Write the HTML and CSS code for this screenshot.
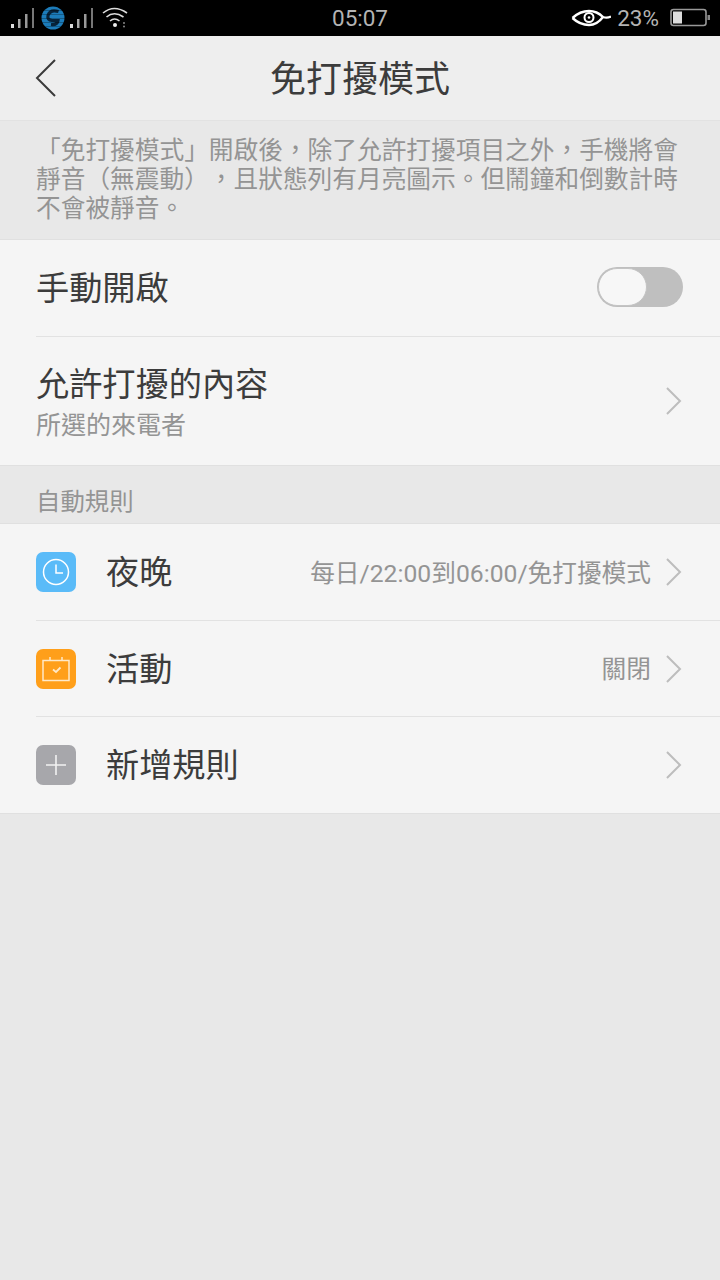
FILE: index.html
```html
<!DOCTYPE html>
<html lang="zh-Hant">
<head>
    <meta charset="UTF-8">
    <meta name="viewport" content="width=device-width, initial-scale=1.0">
    <title>免打擾模式</title>
    <link rel="stylesheet" href="styles.css">
</head>
<body>
    <div class="status-bar">
        <div class="status-left">
            <svg class="signal" width="26" height="22" viewBox="0 0 26 22"><g fill="#ddd"><rect x="1" y="17" width="3" height="4"/><rect x="8" y="12" width="2.5" height="9" fill="#aaa"/><rect x="15" y="7" width="2.5" height="14" fill="#999"/><rect x="22" y="1" width="2" height="20" fill="#777"/></g></svg>
            <svg class="carrier" width="24" height="24" viewBox="0 0 24 24"><circle cx="12" cy="12" r="11.500" fill="#1c7cba"/><path d="M17.500 5.500 Q9 3 7 9.500 Q6 14 11 14.500 L17 14.500 Q16.500 19 10 18.500" fill="none" stroke="#07233a" stroke-width="3.200"/><path d="M1 4.500 H23 M0 8.500 H24 M0 12.500 H24 M0 16.500 H24 M1 20.500 H23" stroke="#000" stroke-opacity="0.350" stroke-width="0.800"/></svg>
            <svg class="signal" width="26" height="22" viewBox="0 0 26 22"><g fill="#ddd"><rect x="1" y="17" width="3" height="4"/><rect x="8" y="12" width="2.5" height="9" fill="#aaa"/><rect x="15" y="7" width="2.5" height="14" fill="#999"/><rect x="22" y="1" width="2" height="20" fill="#777"/></g></svg>
            <svg class="wifi" width="26" height="24" viewBox="0 0 26 24"><g fill="none" stroke="#ddd" stroke-width="1.600"><path d="M1 7 Q12 -2 25 7"/><path d="M4.500 11 Q12 4.500 21.500 11"/><path d="M8 15 Q12.500 11 17.500 15"/></g><circle cx="13" cy="19" r="2" fill="#eee"/><circle cx="22" cy="17" r="1" fill="#888"/><circle cx="22" cy="20.500" r="1" fill="#888"/></svg>
        </div>
        <span class="status-time">05:07</span>
        <div class="status-right">
            <svg class="eye" width="40" height="20" viewBox="0 0 40 20"><path d="M1.500 10 Q9 3 18 3 Q26 3 32 9 Q36 10.500 40 8.500" fill="none" stroke="#fff" stroke-width="2.400"/><path d="M1.500 10 Q9 17 18 17 Q26 17 32 9" fill="none" stroke="#fff" stroke-width="2.400"/><circle cx="18" cy="9.500" r="4.500" fill="none" stroke="#fff" stroke-width="2"/><circle cx="18" cy="9.500" r="1.300" fill="#fff"/></svg>
            <span class="battery-pct">23%</span>
            <svg class="battery" width="40" height="20" viewBox="0 0 40 20"><rect x="1" y="1.500" width="35" height="16" rx="2.500" fill="none" stroke="#999" stroke-width="1.600"/><rect x="3" y="3.500" width="9" height="12" fill="#ddd"/><rect x="37.500" y="7" width="2.500" height="5" fill="#888"/></svg>
        </div>
    </div>

    <header class="title-bar">
        <svg class="back" width="22" height="38" viewBox="0 0 22 38"><path d="M20 1 L2 19 L20 37" fill="none" stroke="#3a3a3a" stroke-width="2"/></svg>
        <h1 class="title">免打擾模式</h1>
    </header>

    <p class="notice">「免打擾模式」開啟後，除了允許打擾項目之外，手機將會靜音（無震動），且狀態列有月亮圖示。但鬧鐘和倒數計時不會被靜音。</p>

    <section class="group">
        <div class="row row-switch">
            <span class="row-label">手動開啟</span>
            <div class="switch"><div class="switch-knob"></div></div>
        </div>
        <div class="row row-double">
            <div class="row-text">
                <span class="row-label">允許打擾的內容</span>
                <span class="row-sub">所選的來電者</span>
            </div>
            <svg class="chevron" width="16" height="28" viewBox="0 0 16 28"><path d="M1 1 L14 14 L1 27" fill="none" stroke="#bdbdbd" stroke-width="2"/></svg>
        </div>
    </section>

    <div class="section-head">自動規則</div>

    <section class="group group-rules">
        <div class="row rule">
            <span class="rule-icon icon-blue">
                <svg width="28" height="28" viewBox="0 0 28 28"><circle cx="14" cy="14" r="12.500" fill="none" stroke="#fff" stroke-width="1.500"/><path d="M14 6.500 V15 H21" fill="none" stroke="#fff" stroke-width="1.500"/></svg>
            </span>
            <span class="row-label">夜晚</span>
            <span class="row-value">每日/22:00到06:00/免打擾模式</span>
            <svg class="chevron" width="16" height="28" viewBox="0 0 16 28"><path d="M1 1 L14 14 L1 27" fill="none" stroke="#bdbdbd" stroke-width="2"/></svg>
        </div>
        <div class="row rule">
            <span class="rule-icon icon-orange">
                <svg width="28" height="26" viewBox="0 0 28 26"><path d="M1 4.500 H27 V24.500 H1 Z M8 1 V4.500 M20 1 V4.500" fill="none" stroke="#ffe9c8" stroke-width="1.500"/><path d="M11 13.500 L14 16 L18.500 11.500" fill="none" stroke="#ffe9c8" stroke-width="1.800"/></svg>
            </span>
            <span class="row-label">活動</span>
            <span class="row-value">關閉</span>
            <svg class="chevron" width="16" height="28" viewBox="0 0 16 28"><path d="M1 1 L14 14 L1 27" fill="none" stroke="#bdbdbd" stroke-width="2"/></svg>
        </div>
        <div class="row rule">
            <span class="rule-icon icon-gray">
                <svg width="22" height="22" viewBox="0 0 22 22"><path d="M11 1 V21 M1 11 H21" fill="none" stroke="#f2f2f2" stroke-width="1.600"/></svg>
            </span>
            <span class="row-label">新增規則</span>
            <span class="row-value"></span>
            <svg class="chevron" width="16" height="28" viewBox="0 0 16 28"><path d="M1 1 L14 14 L1 27" fill="none" stroke="#bdbdbd" stroke-width="2"/></svg>
        </div>
    </section>
</body>
</html>
```

FILE: styles.css
```css
* {
    box-sizing: border-box;
}

body {
    margin: 0;
    min-height: 1280px;
    background-color: #e8e8e8;
    font-family: "Noto Sans CJK TC", "Roboto", sans-serif;
    color: #3c3c3c;
    text-spacing-trim: space-all;
}

.status-bar {
    height: 36px;
    background-color: #000;
    display: flex;
    align-items: center;
    justify-content: space-between;
    padding: 0 10px;
    position: relative;
}

.status-left, .status-right {
    display: flex;
    align-items: center;
}

.status-left .carrier {
    margin: 0 4px 0 5px;
}

.status-left .wifi {
    margin-left: 7px;
}

.status-time {
    position: absolute;
    left: 0;
    right: 0;
    text-align: center;
    font-family: "Roboto", sans-serif;
    font-size: 22.5px;
    color: #b4b4b4;
}

.eye {
    margin-right: 6px;
}

.battery-pct {
    font-family: "Roboto", sans-serif;
    font-size: 22.5px;
    color: #b4b4b4;
    margin-right: 11px;
}

.title-bar {
    height: 84px;
    background-color: #eee;
    display: flex;
    align-items: center;
    justify-content: center;
    position: relative;
    padding-bottom: 4px;
}

.back {
    position: absolute;
    left: 35px;
    top: 23px;
}

.title {
    margin: 0;
    font-size: 36px;
    font-weight: 400;
    color: #3c3c3c;
    line-height: 1;
}

.notice {
    margin: 0;
    height: 119px;
    padding: 13px 36px 0;
    font-size: 24.7px;
    line-height: 29px;
    color: #949494;
    background-color: #e8e8e8;
    border-top: 1px solid #e2e2e2;
}

.group {
    background-color: #f5f5f5;
    border-top: 1px solid #e0e0e0;
    border-bottom: 1px solid #e0e0e0;
}

.row {
    display: flex;
    align-items: center;
    margin-left: 36px;
    padding-right: 38px;
    border-bottom: 1px solid #e2e2e2;
}

.row:last-child {
    border-bottom: none;
}

.row-switch {
    height: 97px;
    justify-content: space-between;
}

.row-double {
    height: 128px;
    justify-content: space-between;
}

.row-text {
    display: flex;
    flex-direction: column;
    margin-bottom: 1px;
}

.row-label {
    font-size: 33.2px;
    line-height: 44px;
    color: #3c3c3c;
    margin-bottom: 4px;
}

.row-sub {
    font-size: 25px;
    line-height: 36px;
    color: #949494;
    margin-top: -3px;
}

.switch {
    width: 86px;
    height: 40px;
    margin-right: -1px;
    margin-bottom: 3px;
    border-radius: 20px;
    background-color: #bfbfbf;
    padding: 1px;
}

.switch-knob {
    width: 49px;
    height: 38px;
    border-radius: 19px;
    background-color: #f7f7f7;
    border: 1px solid #c4c4c4;
}

.section-head {
    height: 57px;
    padding: 16px 0 0 36px;
    font-size: 24.4px;
    line-height: 36px;
    color: #949494;
}

.rule {
    height: 96px;
}

.rule:first-child {
    height: 97px;
}

.rule-icon {
    width: 40px;
    height: 40px;
    border-radius: 7px;
    display: flex;
    align-items: center;
    justify-content: center;
    margin-right: 30px;
    flex-shrink: 0;
}

.icon-blue {
    background-color: #5abbf8;
}

.icon-orange {
    background-color: #ff9f1a;
}

.icon-gray {
    background-color: #a7a7ab;
}

.row-value {
    margin-left: auto;
    margin-right: 15px;
    margin-bottom: 3px;
    font-family: "Roboto", "Noto Sans CJK TC", sans-serif;
    font-size: 24.7px;
    color: #949494;
}
```
